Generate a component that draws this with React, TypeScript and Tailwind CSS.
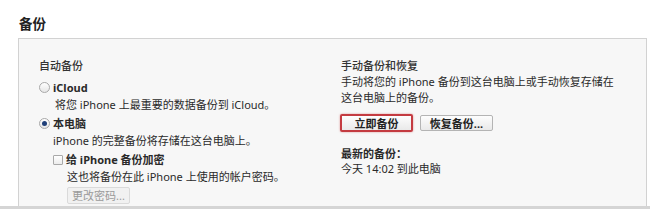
import React from 'react';

const font = { fontFamily: '"Noto Sans", "Noto Sans CJK SC", sans-serif' };

const Radio: React.FC<{ checked?: boolean }> = ({ checked }) => (
  <span className="w-[11px] h-[11px] rounded-full border border-[#a9a9a9] bg-gradient-to-b from-[#ffffff] to-[#e6e6e6] flex items-center justify-center shrink-0">
    {checked && <span className="w-[5px] h-[5px] rounded-full bg-[#1f3f78]"></span>}
  </span>
);

const Checkbox: React.FC = () => (
  <span className="w-[10px] h-[10px] border border-[#a9a9a9] bg-gradient-to-b from-[#ffffff] to-[#ececec] rounded-[1px] shrink-0"></span>
);

const Button: React.FC<{ children: React.ReactNode; primary?: boolean; disabled?: boolean; className?: string }> = ({ children, primary, disabled, className = '' }) => (
  <button
    type="button"
    className={`flex items-center justify-center rounded-[2px] text-[11px] leading-none ${
      primary
        ? 'h-[18px] border-2 border-[#c43b41] shadow-[0_0_2px_rgba(200,60,60,0.6)] bg-gradient-to-b from-[#fdfdfd] to-[#e9e9e9] font-bold text-[#222]'
        : disabled
        ? 'h-[17px] border border-[#dadada] bg-[#f1f1f1] text-[#9a9a9a]'
        : 'h-[16px] border border-[#b4b4b4] bg-gradient-to-b from-[#fdfdfd] to-[#e9e9e9] font-bold text-[#222]'
    } ${className}`}
  >
    {children}
  </button>
);

const App: React.FC = () => {
  return (
    <div className="w-[650px] h-[209px] bg-white overflow-hidden flex flex-col text-[#2a2a2a]" style={font}>
      <div className="pt-[14px] pl-[19px] h-[38px]">
        <h2 className="text-[13.5px] font-bold leading-[20px] text-[#222]">备份</h2>
      </div>
      <div className="flex-1 ml-[18px] mr-[3px] border border-b-0 border-[#d2d2d2] bg-[#f7f7f7] flex overflow-hidden">
        <div className="w-[322px] pl-[20px] pt-[18px] text-[11px]">
          <div className="leading-[17px] font-medium text-[#333]">自动备份</div>
          <div className="mt-[5px]">
            <div className="flex items-center gap-[3px] leading-[17px] font-bold">
              <Radio />
              <span>iCloud</span>
            </div>
            <div className="ml-[16px] leading-[17px]">将您 iPhone 上最重要的数据备份到 iCloud。</div>
          </div>
          <div className="mt-[2px]">
            <div className="flex items-center gap-[3px] leading-[17px] font-bold">
              <Radio checked />
              <span>本电脑</span>
            </div>
            <div className="ml-[14px] leading-[17px]">iPhone 的完整备份将存储在这台电脑上。</div>
          </div>
          <div className="mt-[2px] ml-[14px]">
            <div className="flex items-center gap-[3px] leading-[17px] font-bold">
              <Checkbox />
              <span>给 iPhone 备份加密</span>
            </div>
            <div className="ml-[14px] leading-[17px]">这也将备份在此 iPhone 上使用的帐户密码。</div>
            <Button disabled className="ml-[14px] mt-[2px] w-[63px] font-normal">更改密码...</Button>
          </div>
        </div>
        <div className="flex-1 pt-[18px] text-[11px]">
          <div className="leading-[17px] font-medium text-[#333]">手动备份和恢复</div>
          <p className="leading-[16px]">
            手动将您的 iPhone 备份到这台电脑上或手动恢复存储在
            <br />
            这台电脑上的备份。
          </p>
          <div className="flex items-center gap-[7px] mt-[8px] -ml-[1px]">
            <Button primary className="w-[73px]">立即备份</Button>
            <Button className="w-[73px]">恢复备份...</Button>
          </div>
          <div className="mt-[14px] leading-[15px] font-bold">最新的备份：</div>
          <div className="leading-[15px]">今天 14:02 到此电脑</div>
        </div>
      </div>
      <div className="h-[3px] bg-[#d5d5d5]"></div>
    </div>
  );
};

export default App;
